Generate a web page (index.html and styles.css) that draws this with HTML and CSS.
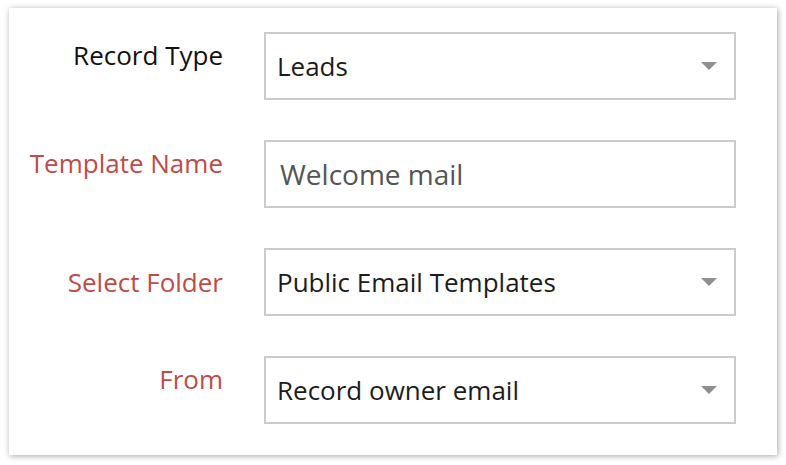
FILE: index.html
```html
<!DOCTYPE html>
<html lang="en">
<head>
    <meta charset="UTF-8">
    <meta name="viewport" content="width=device-width, initial-scale=1.0">
    <title>Email Template</title>
    <link rel="stylesheet" href="styles.css">
</head>
<body>
    <div class="card">
        <!-- Tipo de registro -->
        <div class="label">Record Type</div>
        <div class="field select">
            <span>Leads</span>
            <span class="arrow"></span>
        </div>

        <!-- Nombre de plantilla -->
        <div class="label required">Template Name</div>
        <div class="field text">
            <span>Welcome mail</span>
        </div>

        <!-- Carpeta -->
        <div class="label required low">Select Folder</div>
        <div class="field select">
            <span>Public Email Templates</span>
            <span class="arrow"></span>
        </div>

        <!-- Remitente -->
        <div class="label required">From</div>
        <div class="field select">
            <span>Record owner email</span>
            <span class="arrow"></span>
        </div>
    </div>
</body>
</html>
```

FILE: styles.css
```css
/* Estilos generales */
body {
    margin: 0;
    padding: 8px 9px;
    background: #fff;
    font-family: 'Open Sans', sans-serif;
}

/* Tarjeta */
.card {
    width: 768px;
    height: 447px;
    box-sizing: border-box;
    background: #fff;
    box-shadow: 1px 1px 6px rgba(0, 0, 0, 0.35);
    padding: 24px 41px 0 0;
    display: grid;
    grid-template-columns: 214px 472px;
    grid-auto-rows: 68px;
    column-gap: 41px;
    row-gap: 40px;
}

/* Etiquetas */
.label {
    text-align: right;
    font-size: 26px;
    line-height: 35px;
    color: #111;
    padding-top: 6px;
}

.label.required {
    color: #bf4a47;
}

.label.low {
    padding-top: 17px;
}

/* Campos */
.field {
    border: 2px solid #cbcbcb;
    display: flex;
    align-items: center;
    padding: 0 17px 0 11px;
    font-size: 26px;
    color: #1c1c1c;
}

.field.text {
    color: #555;
    font-size: 28px;
    padding-left: 14px;
}

.field span:first-child {
    flex: 1;
}

.arrow {
    width: 0;
    height: 0;
    border-left: 8px solid transparent;
    border-right: 8px solid transparent;
    border-top: 8px solid #8f8f8f;
}
```
